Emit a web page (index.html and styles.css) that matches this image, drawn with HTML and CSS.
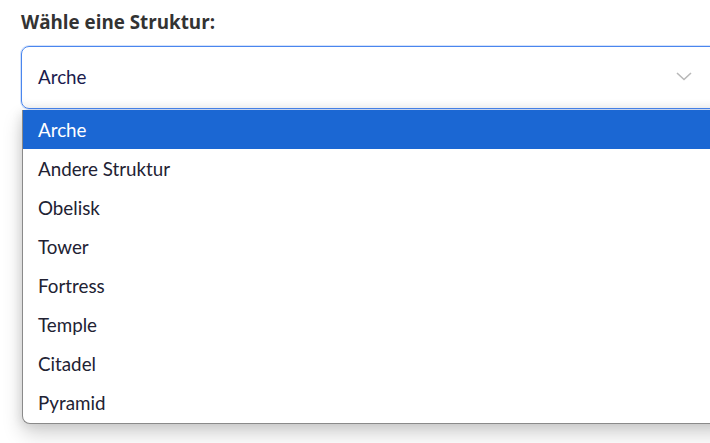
FILE: index.html
```html
<!DOCTYPE html>
<html lang="de">
<head>
<meta charset="utf-8">
<link rel="stylesheet" href="styles.css">
</head>
<body>
<div class="page">
  <label class="label">Wähle eine Struktur:</label>
  <div class="select-wrap">
    <div class="select">
      <span class="value">Arche</span>
      <svg class="chevron" width="16" height="9" viewBox="0 0 16 9"><path d="M1 1 L8 7.5 L15 1" fill="none" stroke="#b8b8b8" stroke-width="1.6"/></svg>
    </div>
    <ul class="options">
      <li class="option selected">Arche</li>
      <li class="option">Andere Struktur</li>
      <li class="option">Obelisk</li>
      <li class="option">Tower</li>
      <li class="option">Fortress</li>
      <li class="option">Temple</li>
      <li class="option">Citadel</li>
      <li class="option">Pyramid</li>
    </ul>
  </div>
</div>
</body>
</html>
```
FILE: styles.css
```css
html, body {
  margin: 0;
  padding: 0;
  background: #ffffff;
  overflow: hidden;
  width: 710px;
  height: 443px;
}
.page {
  padding: 10px 0 0 21px;
  font-family: Lato, "Open Sans", sans-serif;
}
.label {
  display: block;
  font-family: "Open Sans", Lato, sans-serif;
  font-weight: 700;
  font-size: 18.8px;
  color: #333333;
  line-height: 24px;
  margin-bottom: 12px;
}
.select-wrap {
  width: 710px;
}
.select {
  box-sizing: border-box;
  height: 63px;
  border: 1px solid #4a86ee;
  border-radius: 8px;
  box-shadow: 0 0 0 1px rgba(74,134,238,0.25), inset 0 -8px 10px -6px rgba(0,0,0,0.06);
  display: flex;
  align-items: center;
  padding: 0 0 0 16px;
}
.value {
  font-size: 18.8px;
  color: #1b1b4d;
  flex: 1;
  position: relative;
  top: -1px;
}
.chevron {
  margin-right: 38px;
  position: relative;
  top: -1px;
}
.options {
  list-style: none;
  margin: 1px 0 0 1px;
  padding: 0 0 1px 0;
  border-left: 1px solid #8a8a8a;
  border-bottom: 1px solid #8a8a8a;
  border-radius: 0 0 0 8px;
  box-shadow: 0 10px 20px rgba(0,0,0,0.18), -2px 2px 10px rgba(0,0,0,0.08);
  background: #fff;
}
.option {
  height: 39px;
  line-height: 40px;
  padding-left: 15px;
  font-size: 18.8px;
  color: #222233;
}
.option.selected {
  background: #1b67d3;
  color: #ffffff;
}
```
